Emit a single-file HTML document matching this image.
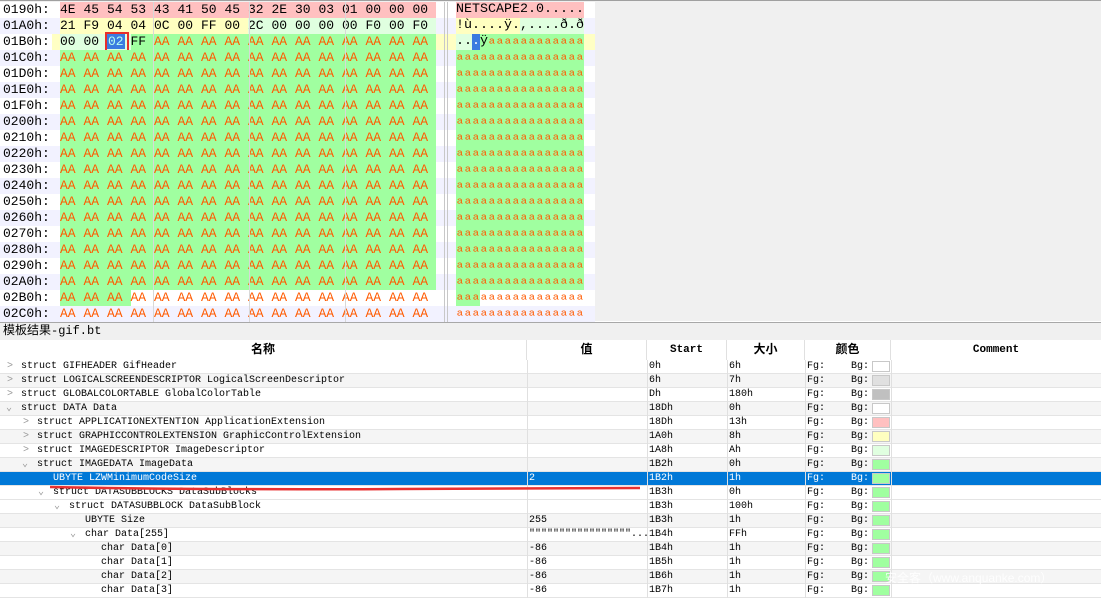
<!DOCTYPE html>
<html><head><meta charset="utf-8"><style>
*{margin:0;padding:0;box-sizing:border-box}
body{width:1101px;height:598px;overflow:hidden;background:#fff;position:relative;font-family:"Liberation Mono","Noto Sans CJK SC",monospace;color:#000}
#top{position:absolute;left:0;top:0;width:1101px;height:321px;background:#f0f0f0;border-top:1px solid #a0a0a0}
#hex{position:absolute;left:0;top:1px;width:595px;height:320px;background:#fff;overflow:hidden}
.r{position:absolute;left:0;width:595px;height:16px;overflow:hidden}
.o{background:#f2f2ff}
.cur{background:#ffffc4}
.l{position:absolute;left:3px;top:0;font-size:13px;line-height:16px;color:#000}
.h{position:absolute;left:60px;top:0;height:16px;white-space:nowrap;font-size:0}
.h i{display:inline-block;width:23.5px;height:16px;font-style:normal;font-size:13px;line-height:16px;color:#000;vertical-align:top}
.h i.a{color:#ff5a00}
.R{background:#ffc0c0}.Y{background:#ffffc0}.E{background:#e0ffe0}.G{background:#a0ffa0}
.as{position:absolute;left:456px;top:0;height:16px;width:128px;font-size:13.33px;line-height:16px;white-space:pre;overflow:hidden;font-family:"Liberation Mono",monospace}
.as b{font-weight:normal;display:inline-block;height:16px;vertical-align:top;line-height:16px;overflow:hidden}
.as.p{line-height:24px}
.as b.q{line-height:24px}
.p,.q{color:#ff5a00}
.vl{position:absolute;top:0;width:1px;height:320px;background:#d8d8d8}
#title{position:absolute;left:0;top:322px;width:1101px;height:18px;background:#f0f0f0;border-top:1px solid #a8a8a8;font-size:12px;line-height:17px;padding-left:3px}
#tbl{position:absolute;left:0;top:340px;width:1101px;height:258px;background:#fff}
.hd{position:absolute;top:0;height:20px;font-weight:bold;font-size:11px;line-height:20px;text-align:center;border-right:1px solid #e0e0e0}
.tr{position:absolute;left:0;width:1101px;height:14px;border-bottom:1px solid #e4e4e4;font-size:10px;line-height:13px;white-space:nowrap}
.tr.a{background:#f5f5f5}
.tr.sel{background:#0078d7;color:#fff}
.tr span{position:absolute;top:0}
.ar{color:#999;font-size:10px}
.sw{position:absolute;left:872px;top:1px;width:18px;height:11px;border:1px solid #c8c8c8}
.cl{position:absolute;top:20px;width:1px;height:238px;background:#e0e0e0}
</style></head><body>
<div id="top">
<div id="hex">
<div class="r" style="top:0"><span class="l">0190h:</span><div class="h"><i class="R">4E</i><i class="R">45</i><i class="R">54</i><i class="R">53</i><i class="R">43</i><i class="R">41</i><i class="R">50</i><i class="R">45</i><i class="R">32</i><i class="R">2E</i><i class="R">30</i><i class="R">03</i><i class="R">01</i><i class="R">00</i><i class="R">00</i><i class="R">00</i></div><div class="as R">NETSCAPE2.0.....</div></div>
<div class="r o" style="top:16px"><span class="l">01A0h:</span><div class="h"><i class="Y">21</i><i class="Y">F9</i><i class="Y">04</i><i class="Y">04</i><i class="Y">0C</i><i class="Y">00</i><i class="Y">FF</i><i class="Y">00</i><i class="E">2C</i><i class="E">00</i><i class="E">00</i><i class="E">00</i><i class="E">00</i><i class="E">F0</i><i class="E">00</i><i class="E">F0</i></div><div class="as"><b class="Y">!ù....ÿ.</b><b class="E">,....ð.ð</b></div></div>
<div class="r cur" style="top:32px;overflow:visible"><span class="l" style="background:#fff;width:52px;left:0;padding-left:3px">01B0h:</span><div class="h"><i class="E">00</i><i class="E">00</i><i class="E" style="position:relative"><span style="background:#3b7be0;color:#bfe;padding:0 1px">02</span><span style="position:absolute;left:-2px;top:-2px;width:24px;height:20px;border:2px solid #e8302a"></span></i><i class="G">FF</i><i class="G a">AA</i><i class="G a">AA</i><i class="G a">AA</i><i class="G a">AA</i><i class="G a">AA</i><i class="G a">AA</i><i class="G a">AA</i><i class="G a">AA</i><i class="G a">AA</i><i class="G a">AA</i><i class="G a">AA</i><i class="G a">AA</i></div><div class="as"><b class="E">..</b><b style="background:#3b7be0;color:#fff">.</b><b class="G">ÿ</b><b class="G q">ªªªªªªªªªªªª</b></div></div>
<div class="r o" style="top:48px"><span class="l">01C0h:</span><div class="h"><i class="G a">AA</i><i class="G a">AA</i><i class="G a">AA</i><i class="G a">AA</i><i class="G a">AA</i><i class="G a">AA</i><i class="G a">AA</i><i class="G a">AA</i><i class="G a">AA</i><i class="G a">AA</i><i class="G a">AA</i><i class="G a">AA</i><i class="G a">AA</i><i class="G a">AA</i><i class="G a">AA</i><i class="G a">AA</i></div><div class="as G p">ªªªªªªªªªªªªªªªª</div></div>
<div class="r" style="top:64px"><span class="l">01D0h:</span><div class="h"><i class="G a">AA</i><i class="G a">AA</i><i class="G a">AA</i><i class="G a">AA</i><i class="G a">AA</i><i class="G a">AA</i><i class="G a">AA</i><i class="G a">AA</i><i class="G a">AA</i><i class="G a">AA</i><i class="G a">AA</i><i class="G a">AA</i><i class="G a">AA</i><i class="G a">AA</i><i class="G a">AA</i><i class="G a">AA</i></div><div class="as G p">ªªªªªªªªªªªªªªªª</div></div>
<div class="r o" style="top:80px"><span class="l">01E0h:</span><div class="h"><i class="G a">AA</i><i class="G a">AA</i><i class="G a">AA</i><i class="G a">AA</i><i class="G a">AA</i><i class="G a">AA</i><i class="G a">AA</i><i class="G a">AA</i><i class="G a">AA</i><i class="G a">AA</i><i class="G a">AA</i><i class="G a">AA</i><i class="G a">AA</i><i class="G a">AA</i><i class="G a">AA</i><i class="G a">AA</i></div><div class="as G p">ªªªªªªªªªªªªªªªª</div></div>
<div class="r" style="top:96px"><span class="l">01F0h:</span><div class="h"><i class="G a">AA</i><i class="G a">AA</i><i class="G a">AA</i><i class="G a">AA</i><i class="G a">AA</i><i class="G a">AA</i><i class="G a">AA</i><i class="G a">AA</i><i class="G a">AA</i><i class="G a">AA</i><i class="G a">AA</i><i class="G a">AA</i><i class="G a">AA</i><i class="G a">AA</i><i class="G a">AA</i><i class="G a">AA</i></div><div class="as G p">ªªªªªªªªªªªªªªªª</div></div>
<div class="r o" style="top:112px"><span class="l">0200h:</span><div class="h"><i class="G a">AA</i><i class="G a">AA</i><i class="G a">AA</i><i class="G a">AA</i><i class="G a">AA</i><i class="G a">AA</i><i class="G a">AA</i><i class="G a">AA</i><i class="G a">AA</i><i class="G a">AA</i><i class="G a">AA</i><i class="G a">AA</i><i class="G a">AA</i><i class="G a">AA</i><i class="G a">AA</i><i class="G a">AA</i></div><div class="as G p">ªªªªªªªªªªªªªªªª</div></div>
<div class="r" style="top:128px"><span class="l">0210h:</span><div class="h"><i class="G a">AA</i><i class="G a">AA</i><i class="G a">AA</i><i class="G a">AA</i><i class="G a">AA</i><i class="G a">AA</i><i class="G a">AA</i><i class="G a">AA</i><i class="G a">AA</i><i class="G a">AA</i><i class="G a">AA</i><i class="G a">AA</i><i class="G a">AA</i><i class="G a">AA</i><i class="G a">AA</i><i class="G a">AA</i></div><div class="as G p">ªªªªªªªªªªªªªªªª</div></div>
<div class="r o" style="top:144px"><span class="l">0220h:</span><div class="h"><i class="G a">AA</i><i class="G a">AA</i><i class="G a">AA</i><i class="G a">AA</i><i class="G a">AA</i><i class="G a">AA</i><i class="G a">AA</i><i class="G a">AA</i><i class="G a">AA</i><i class="G a">AA</i><i class="G a">AA</i><i class="G a">AA</i><i class="G a">AA</i><i class="G a">AA</i><i class="G a">AA</i><i class="G a">AA</i></div><div class="as G p">ªªªªªªªªªªªªªªªª</div></div>
<div class="r" style="top:160px"><span class="l">0230h:</span><div class="h"><i class="G a">AA</i><i class="G a">AA</i><i class="G a">AA</i><i class="G a">AA</i><i class="G a">AA</i><i class="G a">AA</i><i class="G a">AA</i><i class="G a">AA</i><i class="G a">AA</i><i class="G a">AA</i><i class="G a">AA</i><i class="G a">AA</i><i class="G a">AA</i><i class="G a">AA</i><i class="G a">AA</i><i class="G a">AA</i></div><div class="as G p">ªªªªªªªªªªªªªªªª</div></div>
<div class="r o" style="top:176px"><span class="l">0240h:</span><div class="h"><i class="G a">AA</i><i class="G a">AA</i><i class="G a">AA</i><i class="G a">AA</i><i class="G a">AA</i><i class="G a">AA</i><i class="G a">AA</i><i class="G a">AA</i><i class="G a">AA</i><i class="G a">AA</i><i class="G a">AA</i><i class="G a">AA</i><i class="G a">AA</i><i class="G a">AA</i><i class="G a">AA</i><i class="G a">AA</i></div><div class="as G p">ªªªªªªªªªªªªªªªª</div></div>
<div class="r" style="top:192px"><span class="l">0250h:</span><div class="h"><i class="G a">AA</i><i class="G a">AA</i><i class="G a">AA</i><i class="G a">AA</i><i class="G a">AA</i><i class="G a">AA</i><i class="G a">AA</i><i class="G a">AA</i><i class="G a">AA</i><i class="G a">AA</i><i class="G a">AA</i><i class="G a">AA</i><i class="G a">AA</i><i class="G a">AA</i><i class="G a">AA</i><i class="G a">AA</i></div><div class="as G p">ªªªªªªªªªªªªªªªª</div></div>
<div class="r o" style="top:208px"><span class="l">0260h:</span><div class="h"><i class="G a">AA</i><i class="G a">AA</i><i class="G a">AA</i><i class="G a">AA</i><i class="G a">AA</i><i class="G a">AA</i><i class="G a">AA</i><i class="G a">AA</i><i class="G a">AA</i><i class="G a">AA</i><i class="G a">AA</i><i class="G a">AA</i><i class="G a">AA</i><i class="G a">AA</i><i class="G a">AA</i><i class="G a">AA</i></div><div class="as G p">ªªªªªªªªªªªªªªªª</div></div>
<div class="r" style="top:224px"><span class="l">0270h:</span><div class="h"><i class="G a">AA</i><i class="G a">AA</i><i class="G a">AA</i><i class="G a">AA</i><i class="G a">AA</i><i class="G a">AA</i><i class="G a">AA</i><i class="G a">AA</i><i class="G a">AA</i><i class="G a">AA</i><i class="G a">AA</i><i class="G a">AA</i><i class="G a">AA</i><i class="G a">AA</i><i class="G a">AA</i><i class="G a">AA</i></div><div class="as G p">ªªªªªªªªªªªªªªªª</div></div>
<div class="r o" style="top:240px"><span class="l">0280h:</span><div class="h"><i class="G a">AA</i><i class="G a">AA</i><i class="G a">AA</i><i class="G a">AA</i><i class="G a">AA</i><i class="G a">AA</i><i class="G a">AA</i><i class="G a">AA</i><i class="G a">AA</i><i class="G a">AA</i><i class="G a">AA</i><i class="G a">AA</i><i class="G a">AA</i><i class="G a">AA</i><i class="G a">AA</i><i class="G a">AA</i></div><div class="as G p">ªªªªªªªªªªªªªªªª</div></div>
<div class="r" style="top:256px"><span class="l">0290h:</span><div class="h"><i class="G a">AA</i><i class="G a">AA</i><i class="G a">AA</i><i class="G a">AA</i><i class="G a">AA</i><i class="G a">AA</i><i class="G a">AA</i><i class="G a">AA</i><i class="G a">AA</i><i class="G a">AA</i><i class="G a">AA</i><i class="G a">AA</i><i class="G a">AA</i><i class="G a">AA</i><i class="G a">AA</i><i class="G a">AA</i></div><div class="as G p">ªªªªªªªªªªªªªªªª</div></div>
<div class="r o" style="top:272px"><span class="l">02A0h:</span><div class="h"><i class="G a">AA</i><i class="G a">AA</i><i class="G a">AA</i><i class="G a">AA</i><i class="G a">AA</i><i class="G a">AA</i><i class="G a">AA</i><i class="G a">AA</i><i class="G a">AA</i><i class="G a">AA</i><i class="G a">AA</i><i class="G a">AA</i><i class="G a">AA</i><i class="G a">AA</i><i class="G a">AA</i><i class="G a">AA</i></div><div class="as G p">ªªªªªªªªªªªªªªªª</div></div>
<div class="r" style="top:288px"><span class="l">02B0h:</span><div class="h"><i class="G a">AA</i><i class="G a">AA</i><i class="G a">AA</i><i class="a">AA</i><i class="a">AA</i><i class="a">AA</i><i class="a">AA</i><i class="a">AA</i><i class="a">AA</i><i class="a">AA</i><i class="a">AA</i><i class="a">AA</i><i class="a">AA</i><i class="a">AA</i><i class="a">AA</i><i class="a">AA</i></div><div class="as"><b class="G q">ªªª</b><b class="q">ªªªªªªªªªªªªª</b></div></div>
<div class="r o" style="top:304px"><span class="l">02C0h:</span><div class="h"><i class="a">AA</i><i class="a">AA</i><i class="a">AA</i><i class="a">AA</i><i class="a">AA</i><i class="a">AA</i><i class="a">AA</i><i class="a">AA</i><i class="a">AA</i><i class="a">AA</i><i class="a">AA</i><i class="a">AA</i><i class="a">AA</i><i class="a">AA</i><i class="a">AA</i><i class="a">AA</i></div><div class="as p">ªªªªªªªªªªªªªªªª</div></div>
<div class="vl" style="left:153px"></div><div class="vl" style="left:249px"></div><div class="vl" style="left:345px"></div>
<div class="vl" style="left:444px;background:#c8c8c8"></div><div class="vl" style="left:447px;background:#c8c8c8"></div>
</div>
</div>
<div id="title">模板结果-gif.bt</div>
<div id="tbl">
<div class="hd" style="left:0;width:527px;font-size:12px">名称</div>
<div class="hd" style="left:527px;width:120px;font-size:12px">值</div>
<div class="hd" style="left:647px;width:80px">Start</div>
<div class="hd" style="left:727px;width:78px;font-size:12px">大小</div>
<div class="hd" style="left:805px;width:86px;font-size:12px">颜色</div>
<div class="hd" style="left:891px;width:210px;border:0">Comment</div>

<div class="tr" style="top:20px"><span class="ar" style="left:7px">&gt;</span><span style="left:21px">struct GIFHEADER GifHeader</span><span style="left:649px">0h</span><span style="left:729px">6h</span><span style="left:807px">Fg:</span><span style="left:851px">Bg:</span><div class="sw" style="background:#fff"></div></div>
<div class="tr a" style="top:34px"><span class="ar" style="left:7px">&gt;</span><span style="left:21px">struct LOGICALSCREENDESCRIPTOR LogicalScreenDescriptor</span><span style="left:649px">6h</span><span style="left:729px">7h</span><span style="left:807px">Fg:</span><span style="left:851px">Bg:</span><div class="sw" style="background:#e0e0e0"></div></div>
<div class="tr" style="top:48px"><span class="ar" style="left:7px">&gt;</span><span style="left:21px">struct GLOBALCOLORTABLE GlobalColorTable</span><span style="left:649px">Dh</span><span style="left:729px">180h</span><span style="left:807px">Fg:</span><span style="left:851px">Bg:</span><div class="sw" style="background:#c0c0c0"></div></div>
<div class="tr a" style="top:62px"><span class="ar" style="left:6px">⌄</span><span style="left:21px">struct DATA Data</span><span style="left:649px">18Dh</span><span style="left:729px">0h</span><span style="left:807px">Fg:</span><span style="left:851px">Bg:</span><div class="sw" style="background:#fff"></div></div>
<div class="tr" style="top:76px"><span class="ar" style="left:23px">&gt;</span><span style="left:37px">struct APPLICATIONEXTENTION ApplicationExtension</span><span style="left:649px">18Dh</span><span style="left:729px">13h</span><span style="left:807px">Fg:</span><span style="left:851px">Bg:</span><div class="sw" style="background:#ffc0c0"></div></div>
<div class="tr a" style="top:90px"><span class="ar" style="left:23px">&gt;</span><span style="left:37px">struct GRAPHICCONTROLEXTENSION GraphicControlExtension</span><span style="left:649px">1A0h</span><span style="left:729px">8h</span><span style="left:807px">Fg:</span><span style="left:851px">Bg:</span><div class="sw" style="background:#ffffc0"></div></div>
<div class="tr" style="top:104px"><span class="ar" style="left:23px">&gt;</span><span style="left:37px">struct IMAGEDESCRIPTOR ImageDescriptor</span><span style="left:649px">1A8h</span><span style="left:729px">Ah</span><span style="left:807px">Fg:</span><span style="left:851px">Bg:</span><div class="sw" style="background:#e0ffe0"></div></div>
<div class="tr a" style="top:118px"><span class="ar" style="left:22px">⌄</span><span style="left:37px">struct IMAGEDATA ImageData</span><span style="left:649px">1B2h</span><span style="left:729px">0h</span><span style="left:807px">Fg:</span><span style="left:851px">Bg:</span><div class="sw" style="background:#a0ffa0"></div></div>
<div class="tr sel" style="top:132px"><span style="left:53px">UBYTE LZWMinimumCodeSize</span><span style="left:529px">2</span><span style="left:649px">1B2h</span><span style="left:729px">1h</span><span style="left:807px">Fg:</span><span style="left:851px">Bg:</span><div class="sw" style="background:#a0ffa0"></div></div>
<div class="tr" style="top:146px"><span class="ar" style="left:38px">⌄</span><span style="left:53px">struct DATASUBBLOCKS DataSubBlocks</span><span style="left:649px">1B3h</span><span style="left:729px">0h</span><span style="left:807px">Fg:</span><span style="left:851px">Bg:</span><div class="sw" style="background:#a0ffa0"></div></div>
<div class="tr" style="top:160px"><span class="ar" style="left:54px">⌄</span><span style="left:69px">struct DATASUBBLOCK DataSubBlock</span><span style="left:649px">1B3h</span><span style="left:729px">100h</span><span style="left:807px">Fg:</span><span style="left:851px">Bg:</span><div class="sw" style="background:#a0ffa0"></div></div>
<div class="tr a" style="top:174px"><span style="left:85px">UBYTE Size</span><span style="left:529px">255</span><span style="left:649px">1B3h</span><span style="left:729px">1h</span><span style="left:807px">Fg:</span><span style="left:851px">Bg:</span><div class="sw" style="background:#a0ffa0"></div></div>
<div class="tr" style="top:188px"><span class="ar" style="left:70px">⌄</span><span style="left:85px">char Data[255]</span><span style="left:529px">"""""""""""""""""...</span><span style="left:649px">1B4h</span><span style="left:729px">FFh</span><span style="left:807px">Fg:</span><span style="left:851px">Bg:</span><div class="sw" style="background:#a0ffa0"></div></div>
<div class="tr a" style="top:202px"><span style="left:101px">char Data[0]</span><span style="left:529px">-86</span><span style="left:649px">1B4h</span><span style="left:729px">1h</span><span style="left:807px">Fg:</span><span style="left:851px">Bg:</span><div class="sw" style="background:#a0ffa0"></div></div>
<div class="tr" style="top:216px"><span style="left:101px">char Data[1]</span><span style="left:529px">-86</span><span style="left:649px">1B5h</span><span style="left:729px">1h</span><span style="left:807px">Fg:</span><span style="left:851px">Bg:</span><div class="sw" style="background:#a0ffa0"></div></div>
<div class="tr a" style="top:230px"><span style="left:101px">char Data[2]</span><span style="left:529px">-86</span><span style="left:649px">1B6h</span><span style="left:729px">1h</span><span style="left:807px">Fg:</span><span style="left:851px">Bg:</span><div class="sw" style="background:#a0ffa0"></div></div>
<div class="tr" style="top:244px"><span style="left:101px">char Data[3]</span><span style="left:529px">-86</span><span style="left:649px">1B7h</span><span style="left:729px">1h</span><span style="left:807px">Fg:</span><span style="left:851px">Bg:</span><div class="sw" style="background:#a0ffa0"></div></div>

<div class="cl" style="left:527px"></div><div class="cl" style="left:647px"></div><div class="cl" style="left:727px"></div><div class="cl" style="left:805px"></div><div class="cl" style="left:891px"></div>
<svg style="position:absolute;left:0;top:0" width="1101" height="258"><path d="M50 147 Q200 150 400 149 T640 148" stroke="#e83030" stroke-width="2.5" fill="none"/></svg>
<div style="position:absolute;left:885px;top:229px;font-family:'Liberation Sans','Noto Sans CJK SC',sans-serif;font-size:12px;color:rgba(255,255,255,0.85)">安全客（www.anquanke.com）</div>
</div>
</body></html>
